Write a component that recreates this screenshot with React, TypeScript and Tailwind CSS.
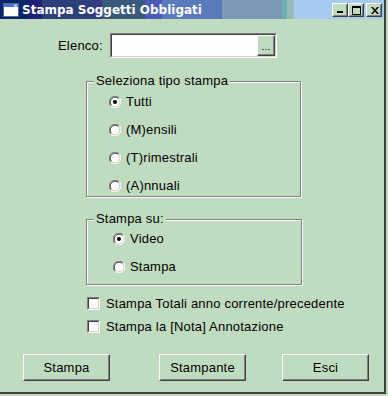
const face = 'bg-[#c0dcc0]';

const titleGradient =
  'bg-[linear-gradient(to_right,#0a246a_0px,#0a246a_30px,#20207a_30px,#20207a_42px,#2c3f78_42px,#2c3f78_95px,#3a3a8c_95px,#3a3a8c_102px,#3a5a7c_102px,#3a5a7c_145px,#4a5ab8_145px,#4a5ab8_162px,#5a7abe_162px,#5a7abe_222px,#7a9ab8_222px,#7a9ab8_282px,#6ab0b0_282px,#6ab0b0_287px,#9abab8_287px,#9abab8_294px,#a6caf0_294px)]';

function Radio({ checked }: { checked?: boolean }) {
  return (
    <svg width="12" height="12" viewBox="0 0 12 12" className="shrink-0">
      <circle cx="6" cy="6" r="5" fill="#ffffff" />
      <path d="M1.76 10.24 A6 6 0 0 1 10.24 1.76" stroke="#808080" strokeWidth="1" fill="none" />
      <path d="M2.47 9.53 A5 5 0 0 1 9.53 2.47" stroke="#404040" strokeWidth="1" fill="none" />
      <path d="M1.76 10.24 A6 6 0 0 0 10.24 1.76" stroke="#ffffff" strokeWidth="1" fill="none" />
      <path d="M2.47 9.53 A5 5 0 0 0 9.53 2.47" stroke="#d4d0c8" strokeWidth="1" fill="none" />
      {checked ? <circle cx="6" cy="6" r="2" fill="#000000" /> : null}
    </svg>
  );
}

function Check() {
  return (
    <span className="block h-[13px] w-[13px] shrink-0 border border-b-white border-l-[#808080] border-r-white border-t-[#808080]">
      <span className="block h-full w-full border border-b-[#d4d0c8] border-l-[#404040] border-r-[#d4d0c8] border-t-[#404040] bg-white" />
    </span>
  );
}

function Button({ label, className }: { label: string; className?: string }) {
  return (
    <div
      className={`h-[27px] w-[87px] border border-b-[#404040] border-l-white border-r-[#404040] border-t-white ${className ?? ''}`}
    >
      <div className="flex h-full w-full items-center justify-center border border-b-[#808080] border-l-[#c0dcc0] border-r-[#808080] border-t-[#c0dcc0] text-[13px] text-black">
        {label}
      </div>
    </div>
  );
}

function CaptionButton({ children, className }: { children: React.ReactNode; className?: string }) {
  return (
    <div
      className={`h-[14px] w-[16px] border border-b-[#404040] border-l-white border-r-[#404040] border-t-white ${face} ${className ?? ''}`}
    >
      <div className="relative h-full w-full border border-b-[#808080] border-l-[#c0dcc0] border-r-[#808080] border-t-[#c0dcc0]">
        {children}
      </div>
    </div>
  );
}

function Group({
  legend,
  className,
  children,
}: {
  legend: string;
  className?: string;
  children: React.ReactNode;
}) {
  return (
    <div
      className={`relative border border-[#808080] shadow-[inset_1px_1px_0_#ffffff,1px_1px_0_#ffffff] ${className ?? ''}`}
    >
      <span className={`absolute left-[7px] top-[-9px] px-[2px] text-[13px] leading-[16px] ${face}`}>
        {legend}
      </span>
      {children}
    </div>
  );
}

function RadioRow({ label, checked }: { label: string; checked?: boolean }) {
  return (
    <div className="flex h-[16px] items-center gap-[5px] text-[13px]">
      <Radio checked={checked} />
      <span>{label}</span>
    </div>
  );
}

export default function App() {
  return (
    <div
      className={`h-[396px] w-[388px] overflow-hidden ${face} font-['Liberation_Sans',Arial,sans-serif] tracking-[0.2px] text-black`}
    >
      <div className="flex h-[394px] w-[386px] flex-col border-b-2 border-r-2 border-b-[#404040] border-r-[#404040]">
        {/* caption */}
        <div className={`flex h-[19px] shrink-0 items-center ${titleGradient}`}>
          <svg width="16" height="14" viewBox="0 0 16 14" className="ml-[3px] shrink-0">
            <rect x="0.5" y="0.5" width="15" height="13" fill="#ffffff" stroke="#5a6a8a" />
            <rect x="1" y="1" width="14" height="3" fill="#3a7ad8" />
            <rect x="11" y="1.5" width="3" height="2" fill="#cfe0ff" />
          </svg>
          <span className="ml-[3px] font-['DejaVu_Sans',Verdana,sans-serif] text-[12px] font-bold tracking-normal text-white">
            Stampa Soggetti Obbligati
          </span>
          <div className="ml-auto mr-[2px] flex items-center">
            <CaptionButton>
              <span className="absolute bottom-[2px] left-[3px] h-[2px] w-[6px] bg-black" />
            </CaptionButton>
            <CaptionButton>
              <span className="absolute left-[2px] top-[1px] h-[9px] w-[9px] border border-t-2 border-black" />
            </CaptionButton>
            <CaptionButton className="ml-[2px]">
              <svg width="8" height="7" viewBox="0 0 8 7" className="absolute left-[3px] top-[2px]">
                <path d="M0 0h2l2 2.5L6 0h2L5 3.5 8 7H6L4 4.5 2 7H0l3-3.5z" fill="#000" />
              </svg>
            </CaptionButton>
          </div>
        </div>

        {/* Elenco */}
        <div className="mt-[14px] flex h-[25px] items-center">
          <span className="ml-[58px] w-[45px] text-[13px]">Elenco:</span>
          <div className="ml-[7px] h-[25px] w-[167px] border border-b-white border-l-[#808080] border-r-white border-t-[#808080]">
            <div className="flex h-full w-full justify-end border border-b-[#d4d0c8] border-l-[#404040] border-r-[#d4d0c8] border-t-[#404040] bg-white">
              <div className={`h-[21px] w-[18px] border border-b-[#404040] border-l-white border-r-[#404040] border-t-white ${face}`}>
                <div className="flex h-full w-full items-end justify-center border border-b-[#808080] border-l-[#c0dcc0] border-r-[#808080] border-t-[#c0dcc0] pb-[2px] text-[10px] leading-[10px]">
                  ...
                </div>
              </div>
            </div>
          </div>
        </div>

        {/* Seleziona tipo stampa */}
        <Group legend="Seleziona tipo stampa" className="ml-[86px] mt-[23px] h-[116px] w-[215px]">
          <div className="flex flex-col gap-[12px] pl-[22px] pt-[12px]">
            <RadioRow label="Tutti" checked />
            <RadioRow label="(M)ensili" />
            <RadioRow label="(T)rimestrali" />
            <RadioRow label="(A)nnuali" />
          </div>
        </Group>

        {/* Stampa su */}
        <Group legend="Stampa su:" className="ml-[86px] mt-[22px] h-[66px] w-[216px]">
          <div className="flex flex-col gap-[12px] pl-[26px] pt-[11px]">
            <RadioRow label="Video" checked />
            <RadioRow label="Stampa" />
          </div>
        </Group>

        {/* opzioni */}
        <div className="ml-[87px] mt-[12px] flex flex-col gap-[10px] text-[13px]">
          <div className="flex h-[13px] items-center gap-[6px]">
            <Check />
            <span>Stampa Totali anno corrente/precedente</span>
          </div>
          <div className="flex h-[13px] items-center gap-[6px]">
            <Check />
            <span>Stampa la [Nota] Annotazione</span>
          </div>
        </div>

        {/* pulsanti */}
        <div className="ml-[23px] mt-[21px] flex">
          <Button label="Stampa" />
          <Button label="Stampante" className="ml-[49px]" />
          <Button label="Esci" className="ml-[36px]" />
        </div>
      </div>
    </div>
  );
}
